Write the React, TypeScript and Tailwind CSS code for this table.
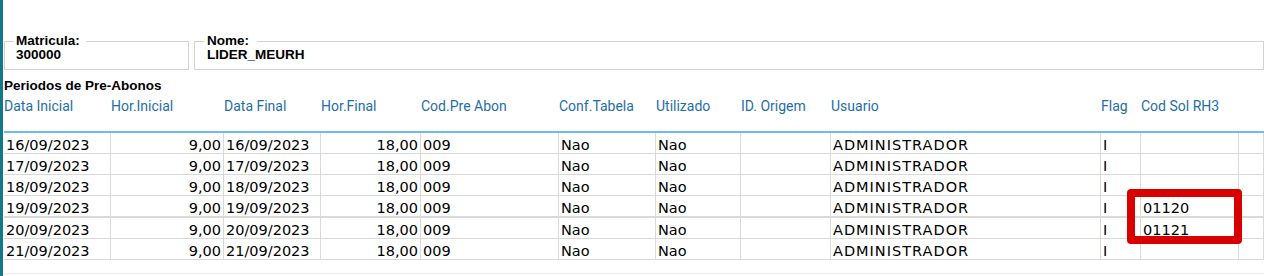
import React from "react";

const rows = [
  { d: "16/09/2023", cod: "" },
  { d: "17/09/2023", cod: "" },
  { d: "18/09/2023", cod: "" },
  { d: "19/09/2023", cod: "01120" },
  { d: "20/09/2023", cod: "01121" },
  { d: "21/09/2023", cod: "" },
];

const cols =
  "grid grid-cols-[107px_113px_97px_100px_138px_97px_85px_90px_270px_40px_98px_25px]";

const headers = [
  "Data Inicial",
  "Hor.Inicial",
  "Data Final",
  "Hor.Final",
  "Cod.Pre Abon",
  "Conf.Tabela",
  "Utilizado",
  "ID. Origem",
  "Usuario",
  "Flag",
  "Cod Sol RH3",
  "",
];

function Cell({
  children,
  right,
  wide,
}: {
  children?: React.ReactNode;
  right?: boolean;
  wide?: boolean;
}) {
  return (
    <div
      className={
        "border-r border-[#d9d9d9] overflow-hidden whitespace-nowrap pt-[4px] leading-[16px] " +
        (right ? "text-right pr-[2px]" : "pl-[2px]") +
        (wide ? " tracking-[1px]" : "")
      }
    >
      {children}
    </div>
  );
}

export default function App() {
  return (
    <div className="relative w-[1264px] h-[276px] bg-white overflow-hidden border-l-[3px] border-[#12798a] pl-[1px] pt-[34px] flex flex-col">
      <div className="flex gap-[5px] font-['Liberation_Sans',Arial,sans-serif] font-bold text-[13.5px] text-black">
        <fieldset className="w-[185px] h-[36px] border border-[#d3d3d3] pl-[11px] leading-[14px]">
          <legend className="-ml-[2px] pl-[2px] pr-[6px] leading-[14px]">Matricula:</legend>
          <div className="leading-[14px]">300000</div>
        </fieldset>
        <fieldset className="flex-1 h-[36px] border border-[#d3d3d3] pl-[12px] leading-[14px]">
          <legend className="-ml-[3px] pl-[3px] pr-[8px] leading-[14px]">Nome:</legend>
          <div className="leading-[14px]">LIDER_MEURH</div>
        </fieldset>
      </div>

      <div className="mt-[9px] font-['Liberation_Sans',Arial,sans-serif] font-bold text-[13.5px] leading-[14px] text-black">
        Periodos de Pre-Abonos
      </div>

      <div
        className={
          cols +
          " h-[40px] border-b-2 border-[#6fbcef] pt-[5px] font-['Roboto',sans-serif] text-[14px] leading-[16px] text-[#1f6ea7]"
        }
      >
        {headers.map((h, i) => (
          <div key={i} className="whitespace-nowrap overflow-hidden">
            {h}
          </div>
        ))}
      </div>

      <div className="font-['Verdana','DejaVu_Sans',sans-serif] text-[14.5px] text-black">
        {rows.map((r, i) => (
          <div
            key={i}
            className={
              cols +
              " border-[#d9d9d9] " +
              (i === 3 ? "h-[22px] border-b-2" : "h-[21px] border-b")
            }
          >
            <Cell>{r.d}</Cell>
            <Cell right>9,00</Cell>
            <Cell>{r.d}</Cell>
            <Cell right>18,00</Cell>
            <Cell>009</Cell>
            <Cell>Nao</Cell>
            <Cell>Nao</Cell>
            <Cell></Cell>
            <Cell wide>ADMINISTRADOR</Cell>
            <Cell>I</Cell>
            <Cell>{r.cod}</Cell>
            <Cell></Cell>
          </div>
        ))}
      </div>

      <div className="h-[14px] border-b border-[#ececec]" />

      <div className="absolute left-[1124px] top-[189px] w-[115px] h-[55px] border-[8px] border-[#d90000] rounded-[4px]" />
    </div>
  );
}
